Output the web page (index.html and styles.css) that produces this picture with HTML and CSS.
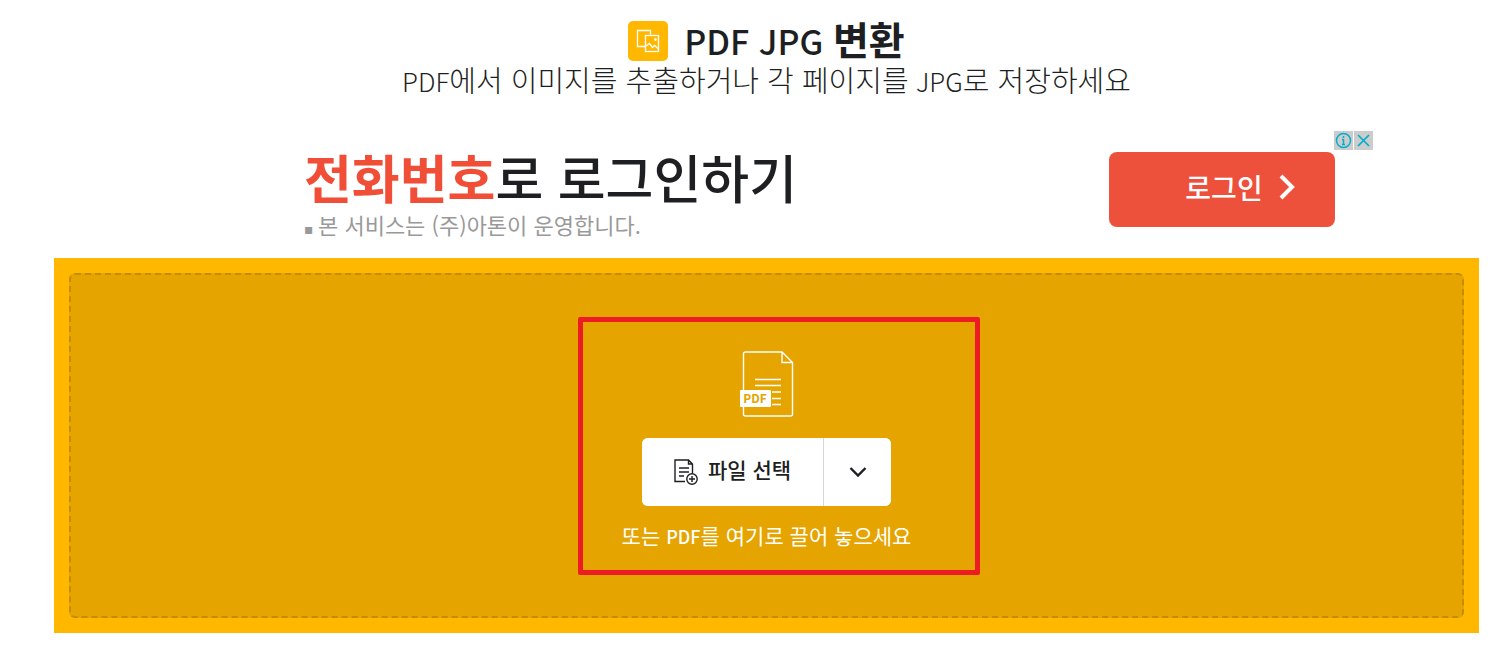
FILE: index.html
```html
<!DOCTYPE html>
<html lang="ko">
  <head>
    <meta charset="UTF-8" />
    <meta name="viewport" content="width=device-width, initial-scale=1.0" />
    <title>PDF JPG 변환</title>
    <link rel="stylesheet" href="styles.css">
  </head>
  <body>
    <main class="page">
      <header class="header">
        <div class="title-row">
          <svg class="title-icon" viewBox="0 0 40 40" fill="none" stroke="#fff">
            <rect width="40" height="40" rx="5" fill="#ffb700" stroke="none" />
            <path d="M17.5 25.5h-8v-16h13v4" stroke-width="1.300" />
            <rect x="17.500" y="14.500" width="13" height="16" stroke-width="1.300" />
            <path d="M18 25l3.500-2.500 3 4 2-2 4 3.500" stroke-width="1.300" />
            <circle cx="27.500" cy="18.500" r="1" fill="#fff" />
          </svg>
          <h1 class="title">PDF JPG <span class="title-ko">변환</span></h1>
        </div>
        <p class="subtitle">PDF<span class="ko">에서 이미지를 추출하거나 각 페이지를</span> JPG<span class="ko">로 저장하세요</span></p>
      </header>

      <!-- 광고 -->
      <section class="ad">
        <div class="ad-text">
          <p class="ad-title"><strong>전화번호</strong>로 로그인하기</p>
          <p class="ad-desc"><span class="bullet">▪</span>본 서비스는 (주)아톤이 운영합니다.</p>
        </div>
        <a class="ad-login" href="#">
          로그인
          <svg width="16" height="26" viewBox="0 0 16 26" fill="none" stroke="#fff" stroke-width="4"><path d="M2 2l11 11L2 24" /></svg>
        </a>
        <div class="ad-choices">
          <button type="button" class="ad-btn" aria-label="광고 정보">
            <svg viewBox="0 0 19 19" fill="none" stroke="#00aecd"><circle cx="9.500" cy="9.500" r="7" stroke-width="1.500" /><path d="M9.500 5v2M9.500 8v6M8 8.500h1.500M8 13.500h3" stroke-width="1.500" /></svg>
          </button>
          <button type="button" class="ad-btn" aria-label="광고 닫기">
            <svg viewBox="0 0 19 19" fill="none" stroke="#00aecd" stroke-width="1.700"><path d="M4 4l11 11M15 4L4 15" /></svg>
          </button>
        </div>
      </section>

      <!-- 파일 업로드 -->
      <section class="upload">
        <div class="dropzone">
          <svg class="file-icon" viewBox="0 0 54 66" fill="none" stroke="#fff">
            <path d="M42 1H5.500a2 2 0 0 0-2 2v60a2 2 0 0 0 2 2h45a2 2 0 0 0 2-2V11.500zV11.500h10.500" stroke-width="1.400" />
            <path d="M15 28.500h26M15 34.500h26M32 41h9M32 47.500h9M32 53.500h9" stroke-width="1.300" />
            <rect y="39" width="31" height="17" rx="1" fill="#fff" stroke="none" />
            <text class="file-label" x="15" y="52">PDF</text>
          </svg>
          <div class="picker">
            <button type="button" class="btn-file">
              <svg class="btn-icon" viewBox="0 0 24 26" fill="none" stroke="#1d1f22" stroke-width="1.400">
                <path d="M11 22.500H1V1h13.500l4 4v9M14.500 1v4h4M5 9h10M5 13h10M5 17h5" />
                <circle cx="18" cy="20" r="5.200" />
                <path d="M18 17v6M15 20h6" />
              </svg>
              <span class="btn-label">파일 선택</span>
            </button>
            <button type="button" class="btn-more" aria-label="다른 위치에서 선택">
              <svg width="18" height="12" viewBox="0 0 18 12" fill="none" stroke="#1d1f22" stroke-width="2.400"><path d="M1.500 2L9 9.500 16.500 2" /></svg>
            </button>
          </div>
          <p class="drop-text">또는 <span class="drop-type">PDF</span>를 여기로 끌어 놓으세요</p>
          <div class="highlight"></div>
        </div>
      </section>
    </main>
  </body>
</html>
```
FILE: styles.css
```css
* {
  box-sizing: border-box;
}
body {
  margin: 0;
  background: #fff;
  color: #1d1f22;
  font-family: "Noto Sans CJK KR", sans-serif;
}
h1,
p {
  margin: 0;
}
button {
  border: 0;
  padding: 0;
  color: inherit;
  font-family: inherit;
  cursor: pointer;
}
svg {
  display: block;
}

.page {
  padding: 20px 20px 26px 54px;
}
.header {
  text-align: center;
}
.title-row {
  display: flex;
  justify-content: center;
  align-items: center;
  gap: 16px;
  height: 42px;
}
.title-icon {
  width: 40px;
  height: 40px;
}
.title {
  padding-bottom: 4px;
  font-size: 34px;
  font-weight: 500;
  line-height: 42px;
}
.title-ko {
  font-size: 39px;
  font-weight: 700;
}
.subtitle {
  height: 36px;
  font-size: 26px;
  font-weight: 300;
  line-height: 34px;
}
.ko {
  font-size: 29px;
}

.ad {
  position: relative;
  display: flex;
  justify-content: space-between;
  align-items: flex-start;
  max-width: 1213px;
  height: 127px;
  margin: 33px auto 0;
  padding: 21px 38px 0 144px;
}
.ad-title {
  font-size: 52px;
  font-weight: 500;
  line-height: 50px;
}
.ad-title strong {
  color: #f04e37;
  font-weight: 700;
}
.ad-desc {
  color: #999;
  font-size: 22px;
  line-height: 44px;
}
.bullet {
  display: inline-block;
  width: 14px;
  font-family: "DejaVu Sans", sans-serif;
  font-size: 14px;
}
.ad-login {
  display: flex;
  justify-content: center;
  align-items: center;
  gap: 16px;
  width: 226px;
  height: 75px;
  padding: 0 0 6px 36px;
  border-radius: 8px;
  background: #ed503b;
  color: #fff;
  font-size: 28px;
  font-weight: 500;
  text-decoration: none;
}
.ad-choices {
  position: absolute;
  top: 0;
  right: 0;
  display: flex;
  gap: 1px;
}
.ad-btn {
  width: 19px;
  height: 19px;
  background: #ccc;
}

.upload {
  padding: 15px;
  background: #ffb700;
}
.dropzone {
  position: relative;
  display: flex;
  flex-direction: column;
  align-items: center;
  height: 345px;
  padding-top: 76px;
  border: 2px dashed #c48d00;
  border-radius: 6px;
  background: #e5a400;
}
.file-icon {
  width: 54px;
  height: 66px;
}
.file-label {
  fill: #e5a400;
  stroke: none;
  font-size: 12px;
  font-weight: 700;
  text-anchor: middle;
}
.picker {
  display: flex;
  height: 68px;
  margin-top: 21px;
  border-radius: 6px;
  background: #fff;
  overflow: hidden;
}
.btn-file {
  display: flex;
  justify-content: center;
  align-items: center;
  gap: 10px;
  width: 182px;
  border-right: 1px solid #d6d6d6;
  background: #fff;
  font-size: 21px;
  font-weight: 500;
}
.btn-label {
  padding-bottom: 6px;
}
.btn-icon {
  width: 24px;
  height: 26px;
}
.btn-more {
  display: flex;
  justify-content: center;
  align-items: center;
  width: 67px;
  background: #fff;
}
.drop-text {
  margin-top: 14px;
  color: #fff;
  font-size: 21px;
  line-height: 30px;
}
.drop-type {
  font-size: 18px;
  font-weight: 500;
}
.highlight {
  position: absolute;
  top: 42px;
  left: calc(50% + 12px);
  width: 402px;
  height: 258px;
  border: 5px solid #ed1c24;
  border-radius: 2px;
  transform: translateX(-50%);
  pointer-events: none;
}
```
